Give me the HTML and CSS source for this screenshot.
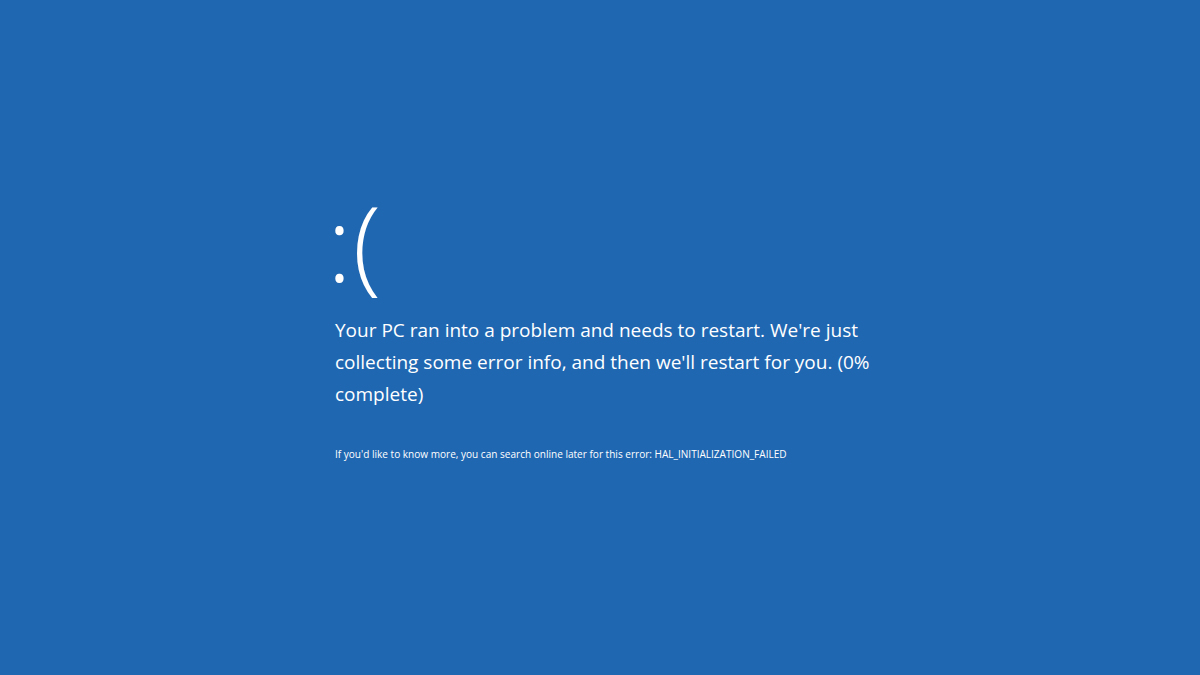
FILE: index.html
```html
<!DOCTYPE html>
<html>
<head>
<meta charset="utf-8">
<link rel="stylesheet" href="styles.css">
</head>
<body>
<main class="screen">
  <div class="content">
    <div class="face">:(</div>
    <p class="message">Your PC ran into a problem and needs to restart. We're just collecting some error info, and then we'll restart for you. (0% complete)</p>
    <p class="detail">If you'd like to know more, you can search online later for this error: HAL_INITIALIZATION_FAILED</p>
  </div>
</main>
</body>
</html>
```
FILE: styles.css
```css
html, body {
  margin: 0;
  padding: 0;
  background: #2067b2;
}
.screen {
  width: 1200px;
  height: 675px;
  background: #2067b2;
  color: #ffffff;
  font-family: "Open Sans", "Noto Sans", sans-serif;
  box-sizing: border-box;
  padding: 175px 0 0 335px;
}
.content {
  width: 545px;
}
.face {
  font-size: 104px;
  line-height: 134px;
  font-weight: 300;
  margin: 0 0 5px -8px;
  letter-spacing: 1px;
}
.message {
  margin: 0;
  font-size: 19px;
  line-height: 32px;
  font-weight: 400;
}
.detail {
  margin: 36px 0 0;
  font-size: 10.05px;
  line-height: 16px;
}
```
